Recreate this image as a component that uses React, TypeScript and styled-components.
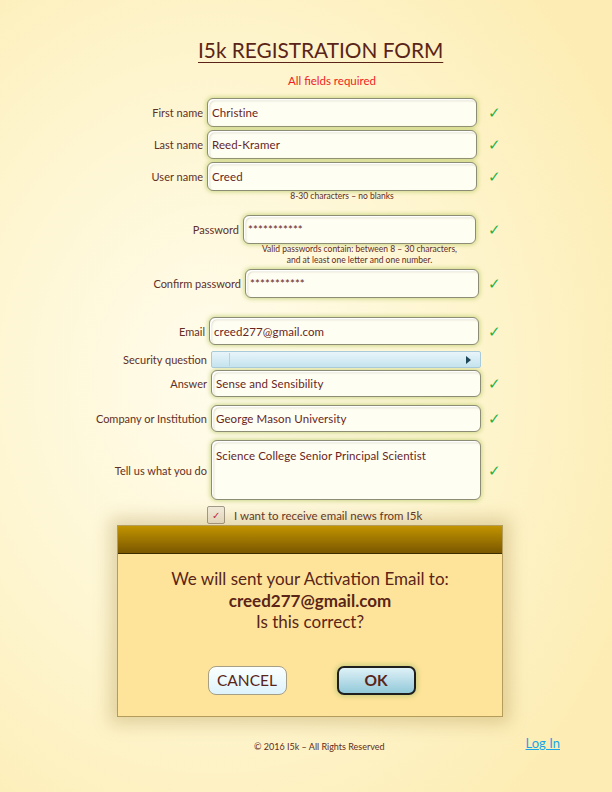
import styled, { createGlobalStyle } from "styled-components";

const GlobalStyle = createGlobalStyle`
  html, body {
    margin: 0;
    padding: 0;
  }
  body {
    font-family: Lato, "Open Sans", sans-serif;
    color: #5e2b22;
  }
`;

type Field = {
  label: string;
  value: string;
  labelWidth: number;
  width: number;
  height: number;
  top: number;
  multiline?: boolean;
  hint?: string[];
};

const fields: Field[] = [
  { label: "First name", value: "Christine", labelWidth: 207, width: 270, height: 29, top: 9 },
  { label: "Last name", value: "Reed-Kramer", labelWidth: 207, width: 270, height: 29, top: 3 },
  {
    label: "User name",
    value: "Creed",
    labelWidth: 207,
    width: 270,
    height: 29,
    top: 3,
    hint: ["8-30 characters – no blanks"],
  },
  {
    label: "Password",
    value: "***********",
    labelWidth: 243,
    width: 233,
    height: 29,
    top: 13,
    hint: [
      "Valid passwords contain: between 8 – 30 characters,",
      "and at least one letter and one number.",
    ],
  },
  { label: "Confirm password", value: "***********", labelWidth: 245, width: 234, height: 29, top: 3 },
  { label: "Email", value: "creed277@gmail.com", labelWidth: 209, width: 270, height: 28, top: 19 },
];

const lowerFields: Field[] = [
  { label: "Answer", value: "Sense and Sensibility", labelWidth: 211, width: 270, height: 27, top: 2 },
  { label: "Company or Institution", value: "George Mason University", labelWidth: 211, width: 270, height: 27, top: 8 },
  {
    label: "Tell us what you do",
    value: "Science College Senior Principal Scientist",
    labelWidth: 211,
    width: 270,
    height: 60,
    top: 8,
    multiline: true,
  },
];

function FieldRow({ f }: { f: Field }) {
  return (
    <>
      <Row $top={f.top}>
        <Label $width={f.labelWidth}>{f.label}</Label>
        <Input $width={f.width} $height={f.height} $multiline={f.multiline}>
          {f.value}
        </Input>
        <Check>✓</Check>
      </Row>
      {f.hint && (
        <Hint $center={f.labelWidth + f.width / 2}>
          {f.hint.map((line) => (
            <div key={line}>{line}</div>
          ))}
        </Hint>
      )}
    </>
  );
}

export default function App() {
  return (
    <Page>
      <GlobalStyle />
      <Title>I5k REGISTRATION FORM</Title>
      <Required>All fields required</Required>
      {fields.map((f) => (
        <FieldRow key={f.label} f={f} />
      ))}
      <Row $top={6}>
        <Label $width={211}>Security question</Label>
        <Select>
          <SelectArrow />
        </Select>
      </Row>
      {lowerFields.map((f) => (
        <FieldRow key={f.label} f={f} />
      ))}
      <OptIn>
        <CheckBox>✓</CheckBox>
        <span>I want to receive email news from I5k</span>
      </OptIn>
      <Dialog>
        <DialogBar />
        <DialogBody>
          <Message>
            We will sent your Activation Email to:
            <br />
            <strong>creed277@gmail.com</strong>
            <br />
            Is this correct?
          </Message>
          <Buttons>
            <CancelButton>CANCEL</CancelButton>
            <OkButton>OK</OkButton>
          </Buttons>
        </DialogBody>
      </Dialog>
      <Footer>
        <Copyright>© 2016 I5k – All Rights Reserved</Copyright>
        <LogIn href="#">Log In</LogIn>
      </Footer>
    </Page>
  );
}

const Page = styled.div`
  width: 612px;
  min-height: 792px;
  box-sizing: border-box;
  padding-top: 35px;
  display: flex;
  flex-direction: column;
  background: radial-gradient(
    ellipse 75% 70% at 35% 48%,
    #fffcec 0%,
    #fef6d2 50%,
    #fdedb4 100%
  );
  overflow: hidden;
`;

const Title = styled.h1`
  margin: 0 0 0 198px;
  font-size: 20.8px;
  font-weight: 400;
  line-height: 30px;
  text-decoration: underline;
  text-decoration-thickness: 1px;
  text-underline-offset: 4px;
  color: #5a2418;
`;

const Required = styled.div`
  margin: 8px 0 0 288px;
  font-size: 11.5px;
  line-height: 16px;
  color: #f01c1c;
`;

const Row = styled.div<{ $top: number }>`
  display: flex;
  align-items: center;
  width: 502px;
  margin-top: ${(p) => p.$top}px;
`;

const Label = styled.div<{ $width: number }>`
  flex: none;
  width: ${(p) => p.$width}px;
  box-sizing: border-box;
  padding-right: 4px;
  text-align: right;
  font-size: 11px;
  color: #603026;
  white-space: nowrap;
`;

const Input = styled.div<{ $width: number; $height: number; $multiline?: boolean }>`
  flex: none;
  width: ${(p) => p.$width}px;
  height: ${(p) => p.$height}px;
  box-sizing: border-box;
  display: flex;
  align-items: ${(p) => (p.$multiline ? "flex-start" : "center")};
  padding: ${(p) => (p.$multiline ? "8px 4px" : "0 4px")};
  background: #fffef2;
  border: 1.5px solid #8d8c74;
  border-radius: 6px;
  box-shadow: 0 0 4px 1px rgba(190, 205, 110, 0.75),
    inset 1.5px 1.5px 0 #ffffff, inset 2px 2px 2px rgba(140, 140, 110, 0.35);
  font-size: 11.5px;
  color: #66261f;
  letter-spacing: 0.1px;
`;

const Check = styled.span`
  margin-left: auto;
  width: 16px;
  text-align: center;
  font-size: 15px;
  color: #1fb24a;
`;

const Hint = styled.div<{ $center: number }>`
  width: 300px;
  margin-left: ${(p) => p.$center - 150}px;
  text-align: center;
  font-size: 8.5px;
  line-height: 11px;
  color: #5e2b22;
`;

const Select = styled.div`
  flex: none;
  position: relative;
  width: 270px;
  height: 17px;
  box-sizing: border-box;
  border: 1px solid #a9cbd9;
  border-radius: 2px;
  background: linear-gradient(#e8f5fa, #c5e3ee);
  &::before {
    content: "";
    position: absolute;
    left: 17px;
    top: 1px;
    bottom: 1px;
    width: 1px;
    background: #b7d3de;
  }
`;

const SelectArrow = styled.span`
  position: absolute;
  right: 9px;
  top: 4px;
  width: 0;
  height: 0;
  border-top: 4px solid transparent;
  border-bottom: 4px solid transparent;
  border-left: 5px solid #1d4756;
`;

const OptIn = styled.label`
  display: flex;
  align-items: center;
  gap: 9px;
  margin: 6px 0 0 207px;
  font-size: 11.5px;
  color: #603026;
`;

const CheckBox = styled.span`
  width: 18px;
  height: 18px;
  box-sizing: border-box;
  display: flex;
  align-items: center;
  justify-content: center;
  border: 1px solid #a29a8c;
  border-radius: 2px;
  background: #f3ecdc;
  color: #c3203c;
  font-size: 10px;
`;

const Dialog = styled.div`
  width: 386px;
  height: 192px;
  margin: 1px 0 0 117px;
  box-sizing: border-box;
  display: flex;
  flex-direction: column;
  border: 1px solid #b49c5c;
  background: #fee49a;
  box-shadow: 0 0 16px 7px rgba(150, 120, 40, 0.28);
`;

const DialogBar = styled.div`
  height: 27px;
  flex: none;
  background: linear-gradient(#c29400, #7a5700);
  border-bottom: 1px solid #3c2c00;
`;

const DialogBody = styled.div`
  flex: 1;
  display: flex;
  flex-direction: column;
  align-items: center;
  padding-top: 14px;
`;

const Message = styled.div`
  text-align: center;
  font-size: 17px;
  line-height: 21.5px;
  color: #5a2418;
  strong {
    font-weight: 700;
  }
`;

const Buttons = styled.div`
  display: flex;
  gap: 50px;
  margin: 33px 0 0 3px;
`;

const CancelButton = styled.button`
  width: 79px;
  height: 29px;
  border: 1px solid #a79f85;
  border-radius: 8px;
  background: linear-gradient(#fbffff, #ddf3fb);
  font-family: Lato, "Open Sans", sans-serif;
  font-size: 15.5px;
  color: #5a2418;
  padding: 0;
`;

const OkButton = styled.button`
  width: 79px;
  height: 29px;
  border: 2px solid #1e1e1e;
  border-radius: 7px;
  background: linear-gradient(#dff1f7, #92c9d9);
  box-shadow: 0 0 4px 2px rgba(190, 200, 120, 0.7);
  font-family: Lato, "Open Sans", sans-serif;
  font-size: 15.5px;
  font-weight: 700;
  color: #5a2418;
  padding: 0;
`;

const Footer = styled.div`
  display: flex;
  align-items: flex-start;
  margin-top: 18px;
`;

const Copyright = styled.div`
  margin: 6px 0 0 254px;
  font-size: 9px;
  color: #5e2b22;
`;

const LogIn = styled.a`
  margin-left: auto;
  margin-right: 52px;
  font-size: 13px;
  color: #19a5e6;
  text-decoration: underline;
`;
